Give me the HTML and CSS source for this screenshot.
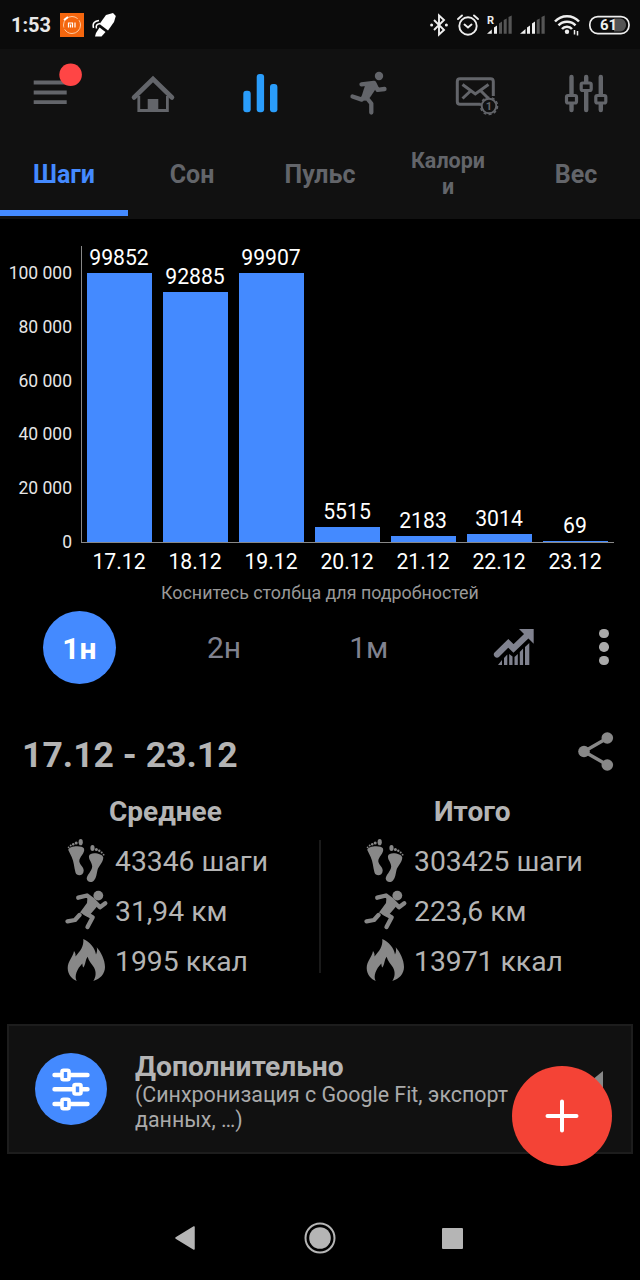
FILE: index.html
```html
<!DOCTYPE html>
<html lang="ru">
<head>
    <meta charset="UTF-8">
    <meta name="viewport" content="width=device-width, initial-scale=1.0">
    <title>Шаги</title>
    <link rel="stylesheet" href="styles.css">
</head>
<body>

    <!-- Shared icons -->
    <svg class="sprite" width="0" height="0">
        <symbol id="icon-feet" viewBox="0 0 44 44">
            <path d="M3.3 11C3 7 17 5.500 19 9.500C20.500 14 14 18 14.300 22.500C15 26 18.700 28 18.700 31.500C18.500 37.500 11.500 37.500 10.500 33.500C9 28 9 23 6.700 18Z"/>
            <ellipse cx="15.700" cy="3.200" rx="2.100" ry="3.100"/>
            <circle cx="11.200" cy="4" r="1.500"/><circle cx="8.200" cy="5.200" r="1.200"/><circle cx="5.700" cy="6.600" r="1"/><circle cx="3.600" cy="8.300" r=".9"/>
            <path d="M24 17C25 12 38 14.500 38.300 18.500C38 24 33.500 27 32.500 31C31.500 35 31.500 39 29 41.500C26 44.500 21.700 42.500 21.700 39.500C21.800 36 27 32 27.200 27.500C27 23 23.500 21 24 17Z"/>
            <ellipse cx="27.500" cy="9" rx="2.100" ry="3"/>
            <circle cx="31.400" cy="10.400" r="1.500"/><circle cx="34.300" cy="11.800" r="1.200"/><circle cx="36.700" cy="13.500" r="1"/><circle cx="38.600" cy="15.700" r=".9"/>
        </symbol>
        <symbol id="icon-sprint" viewBox="0 0 44 44">
            <circle cx="33.300" cy="6.600" r="4.900"/>
            <g fill="none" stroke="currentColor" stroke-width="4.300" stroke-linecap="round" stroke-linejoin="round">
                <path d="M13.200 8.700L22 6.500L28 11L35 18.300L40.300 14.300"/>
                <path d="M20 24L27.700 28.300L22.500 38"/>
                <path d="M14.500 26L10 31L2.500 32.400"/>
            </g>
            <path d="M22.500 8L32.500 17L23 28L15 23.500L22 14Z"/>
        </symbol>
        <symbol id="icon-flame" viewBox="0 0 44 44">
            <path d="M18.300 0C25 3 30 9 31 15.500C32.300 13 32.300 10.500 31.700 8.300C36 13 40 21 40 28C40 35 35 40 28.300 42C31 38 31.500 33 29 28.500C27 25 23.500 22 22.700 17.700C20 21 21 25 18.300 28.500C17.600 27.500 17.500 26 17.300 24.500C12 30 9 37 11.700 42C6.500 40 2.700 35 2.700 29C2.700 22 8 18 9 12C10.300 14 10.800 15 10.500 17.500C15 12 19 8 18.300 0Z"/>
        </symbol>
    </svg>

    <header class="status-bar">
        <span class="time">1:53</span>
        <svg class="app-badge" width="24" height="24" viewBox="0 0 24 24">
            <rect width="24" height="24" fill="#f4660e"/>
            <circle cx="12" cy="12" r="8.500" fill="none" stroke="#ffc9a0" stroke-width="1" stroke-dasharray="22 2"/>
            <path d="M4 7L8 4" stroke="#fff" stroke-width="2"/>
            <path d="M8.500 14.500V10H12.500V14.500M10.500 11.500V14.500M15 9.500V14.500" fill="none" stroke="#fff" stroke-width="1.200"/>
        </svg>
        <svg class="rocket" width="24" height="24" viewBox="0 0 24 24">
            <path d="M14 2L21 0L23.800 3L22 9L16 17.500L7.500 11Z" fill="#fff"/>
            <path d="M7.500 14.500L13.500 19L9.500 23.500H3L4 20Z" fill="#fff"/>
            <path d="M1.500 15C0 10 3 8 7 7.500M4.500 15.500C3.500 12.500 5 11 8 10.500" fill="none" stroke="#fff" stroke-width="1.500"/>
        </svg>
        <div class="status-right">
            <svg width="20" height="24" viewBox="0 0 20 24">
                <path d="M5 7L15 17L10 21.500V2.500L15 7L5 17" fill="none" stroke="#eee" stroke-width="1.900"/>
                <circle cx="2.600" cy="12" r="1.500" fill="#eee"/><circle cx="17.400" cy="12" r="1.500" fill="#eee"/>
            </svg>
            <svg width="24" height="24" viewBox="0 0 24 24" fill="none" stroke="#eee" stroke-width="1.900" stroke-linecap="round">
                <circle cx="12" cy="13" r="8.700"/>
                <path d="M8.500 11.500L12 14.500L15.500 11.500M2 6L6 2.500M22 6L18 2.500"/>
            </svg>
            <svg width="25" height="24" viewBox="0 0 25 24" fill="#eee">
                <text class="roaming" x="0" y="10.500">R</text>
                <path d="M0 20.700L4.800 16.500V20.700ZM7 14.500L10 12.500V20.700H7Z"/>
                <path class="dim" d="M12 10.500L15 8.500V20.700H12ZM16.700 7L19.700 5.500V20.700H16.700ZM21.500 4L24.700 2.500V20.700H21.500Z"/>
            </svg>
            <svg width="26" height="24" viewBox="-1 0 26 24" fill="#eee">
                <path d="M0 20.700L5.500 16V20.700ZM7 14.500L10 12.500V20.700H7ZM12 10.500L15 8.500V20.700H12Z"/>
                <path class="dim" d="M16.700 7L19.700 5.500V20.700H16.700ZM21.500 4L24.700 2.500V20.700H21.500Z"/>
            </svg>
            <svg width="29" height="24" viewBox="0 0 29 24" fill="none" stroke="#eee" stroke-width="2.500">
                <path d="M3 8.500C9.500 1.500 20.500 1.500 27 8.500M6.500 12.300C11 7.500 19 7.500 23.500 12.300M10 16C12.500 13 17.500 13 20 16"/>
                <circle cx="15" cy="18.800" r="2.200" fill="#eee" stroke="none"/>
                <path d="M22.500 17V21.500M25.500 18V22.500" stroke-width="1.500"/>
            </svg>
            <svg width="43" height="24" viewBox="0 0 43 24">
                <path d="M26 5.500H32C40 6 40 18 32 18.500H26Z" fill="#555"/>
                <rect x="1.800" y="3.600" width="39.200" height="17" rx="8" fill="none" stroke="#eee" stroke-width="1.700"/>
                <text class="battery" x="20.500" y="17.300">61</text>
            </svg>
        </div>
    </header>

    <nav class="main-nav">
        <a><svg width="60" height="60" viewBox="0 0 60 60">
            <path d="M13.700 17.500H46.700M13.700 27.500H46.700M13.700 37.200H46.700" stroke="currentColor" stroke-width="3.800"/>
            <circle cx="50.600" cy="9.700" r="11.300" fill="#ff4545"/>
        </svg></a>
        <a><svg width="60" height="60" viewBox="0 0 60 60" fill="none" stroke="currentColor">
            <path d="M11 32.500L30 14L49 32.500" stroke-width="4.600" stroke-linecap="round"/>
            <path d="M15.800 31V45.500H44.400V31" stroke-width="2.800"/>
            <rect x="24.700" y="34" width="10.600" height="12" fill="currentColor" stroke="none"/>
        </svg></a>
        <a class="active"><svg width="60" height="60" viewBox="0 0 60 60" fill="currentColor">
            <rect x="12.300" y="25.700" width="7.400" height="21.600" rx="3"/>
            <rect x="25.700" y="9" width="7.400" height="38.300" rx="3"/>
            <rect x="39" y="19" width="7.400" height="28.300" rx="3"/>
        </svg></a>
        <a><svg width="60" height="60" viewBox="0 0 60 60">
            <circle cx="40" cy="11" r="4.200" fill="currentColor"/>
            <path d="M27 17.500L37 17.500L38 22L31 32.500L26 36L22 33Z" fill="currentColor"/>
            <g fill="none" stroke="currentColor" stroke-width="4.300" stroke-linecap="round" stroke-linejoin="round">
                <path d="M22.500 19.300L35 17.800L38.500 24.800L45.500 24"/>
                <path d="M33 22L22.800 34.600L13.500 31.500"/>
                <path d="M27 32L32.300 38.500L32.300 47.500"/>
            </g>
        </svg></a>
        <a><svg width="60" height="60" viewBox="0 0 60 60" fill="none" stroke="currentColor" stroke-width="3">
            <path d="M33 39.300H13Q10.300 39.300 10.300 36.500V16.500Q10.300 13.700 13 13.700H43.500Q46.300 13.700 46.300 16.500V31" />
            <path d="M15.500 19.500L28.300 29L41.500 19.500M15.500 33.500L23.500 26M41 33L34 26"/>
            <circle cx="42" cy="41" r="7.300" stroke-width="2"/>
            <circle cx="42" cy="41" r="8.600" stroke-width="1.400" stroke-dasharray="3 2.400"/>
            <text class="mail-count" x="42" y="45">1</text>
        </svg></a>
        <a><svg width="60" height="60" viewBox="0 0 60 60" fill="none" stroke="currentColor">
            <path d="M15.500 12V45M30.200 12V45M44.800 12V45" stroke-width="4.400" stroke-linecap="round"/>
            <g fill="#111" stroke-width="3.200">
                <rect x="10.500" y="30.500" width="10" height="7.500" rx="1.500"/>
                <rect x="25.200" y="18" width="10" height="7.500" rx="1.500"/>
                <rect x="39.800" y="30.500" width="10" height="7.500" rx="1.500"/>
            </g>
        </svg></a>
    </nav>

    <div class="tabs">
        <div class="tab active">Шаги</div>
        <div class="tab">Сон</div>
        <div class="tab">Пульс</div>
        <div class="tab small">Калори<br>и</div>
        <div class="tab">Вес</div>
    </div>

    <main>
        <div class="chart">
            <div class="y-axis">
                <span>100 000</span>
                <span>80 000</span>
                <span>60 000</span>
                <span>40 000</span>
                <span>20 000</span>
                <span>0</span>
            </div>
            <div class="plot">
                <div class="column"><span>99852</span><div class="bar" style="height: 269px"></div></div>
                <div class="column"><span>92885</span><div class="bar" style="height: 250px"></div></div>
                <div class="column"><span>99907</span><div class="bar" style="height: 269px"></div></div>
                <div class="column"><span>5515</span><div class="bar" style="height: 15px"></div></div>
                <div class="column"><span>2183</span><div class="bar" style="height: 6px"></div></div>
                <div class="column"><span>3014</span><div class="bar" style="height: 8px"></div></div>
                <div class="column"><span>69</span><div class="bar" style="height: 1px"></div></div>
            </div>
            <div class="x-axis">
                <span>17.12</span>
                <span>18.12</span>
                <span>19.12</span>
                <span>20.12</span>
                <span>21.12</span>
                <span>22.12</span>
                <span>23.12</span>
            </div>
        </div>
        <p class="hint">Коснитесь столбца для подробностей</p>

        <div class="periods">
            <div class="period selected">1н</div>
            <div class="period">2н</div>
            <div class="period">1м</div>
            <div class="period">
                <svg width="40" height="37" viewBox="-1 0 40 37">
                    <path d="M3 25.500L14.300 14.300L19.500 19.500L33 6.500" fill="none" stroke="currentColor" stroke-width="6.200" stroke-linecap="round"/>
                    <path d="M25 0H39.700V14.700Z" fill="currentColor"/>
                    <path d="M4 36L8 31V36ZM10 29L13.300 25.500V36H10ZM15.200 25L18.500 27.500V36H15.200ZM20.500 28L23.800 25V36H20.500ZM25.800 23L29.100 19.500V36H25.800ZM31 18L35.300 14V36H31Z" fill="currentColor"/>
                </svg>
            </div>
            <div class="more"><i></i><i></i><i></i></div>
        </div>

        <section class="summary">
            <div class="summary-head">
                <h1>17.12 - 23.12</h1>
                <svg width="36" height="40" viewBox="0 0 36 40">
                    <path d="M29.500 6L6 19.500L29.500 33" fill="none" stroke="#888" stroke-width="3.400"/>
                    <circle cx="29.300" cy="6" r="5.800"/><circle cx="6" cy="19.500" r="5.800"/><circle cx="29.300" cy="33" r="5.800"/>
                </svg>
            </div>
            <div class="stats">
                <div class="stat-col average">
                    <h2>Среднее</h2>
                    <div class="stat"><svg><use href="#icon-feet"/></svg>43346 шаги</div>
                    <div class="stat"><svg><use href="#icon-sprint"/></svg>31,94 км</div>
                    <div class="stat"><svg><use href="#icon-flame"/></svg>1995 ккал</div>
                </div>
                <div class="divider"></div>
                <div class="stat-col total">
                    <h2>Итого</h2>
                    <div class="stat"><svg><use href="#icon-feet"/></svg>303425 шаги</div>
                    <div class="stat"><svg><use href="#icon-sprint"/></svg>223,6 км</div>
                    <div class="stat"><svg><use href="#icon-flame"/></svg>13971 ккал</div>
                </div>
            </div>
        </section>

        <div class="extra-card">
            <div class="extra-icon">
                <svg width="40" height="44" viewBox="0 0 40 44" fill="none" stroke="#fff">
                    <path d="M3.500 8H36.500M3.500 22.300H36.500M3.500 37H36.500" stroke-width="4.400" stroke-linecap="round"/>
                    <g fill="#448aff" stroke-width="3.600">
                        <rect x="11" y="3.300" width="7" height="9.400" rx="1.500"/>
                        <rect x="23" y="17.600" width="7" height="9.400" rx="1.500"/>
                        <rect x="11" y="32.300" width="7" height="9.400" rx="1.500"/>
                    </g>
                </svg>
            </div>
            <div class="extra-text">
                <h3>Дополнительно</h3>
                <p>(Синхронизация с Google Fit, экспорт данных, …)</p>
            </div>
            <svg class="expand" width="22" height="36" viewBox="0 0 22 36"><path d="M22 0V36L0 18Z" fill="#888"/></svg>
            <button class="fab">
                <svg width="34" height="34" viewBox="0 0 34 34"><path d="M17 2.500V31.500M2.500 17H31.500" stroke="#fff" stroke-width="4" stroke-linecap="round"/></svg>
            </button>
        </div>
    </main>

    <footer class="system-nav">
        <svg width="20" height="24" viewBox="0 0 20 24"><path d="M19 1V23L1 12Z" stroke="#b5b5b5" stroke-width="1.500" stroke-linejoin="round"/></svg>
        <svg width="32" height="32" viewBox="0 0 32 32"><circle cx="16" cy="16" r="14.500" fill="none" stroke="#b5b5b5" stroke-width="2"/><circle cx="16" cy="16" r="10.800"/></svg>
        <svg width="21" height="21" viewBox="0 0 21 21"><rect width="21" height="21" rx="1"/></svg>
    </footer>

</body>
</html>
```
FILE: styles.css
```css
* {
    box-sizing: border-box;
}

body {
    margin: 0;
    width: 640px;
    height: 1280px;
    display: flex;
    flex-direction: column;
    background-color: #000;
    color: #b4b4b4;
    font-family: Roboto, "Noto Sans", sans-serif;
    overflow: hidden;
}

h1, h2, h3, p {
    margin: 0;
}

svg {
    display: block;
    overflow: visible;
    flex-shrink: 0;
}

.sprite {
    position: absolute;
}

/* Status bar */
.status-bar {
    height: 49px;
    display: flex;
    align-items: center;
    padding: 0 9px 0 11px;
    background-color: #0b0b0b;
}

.time {
    width: 49px;
    color: #e8e8e8;
    font-size: 20px;
    font-weight: 700;
}

.rocket {
    margin-left: 8px;
}

.status-right {
    margin-left: auto;
    display: flex;
    gap: 7px;
}

.dim {
    fill: #555;
}

.roaming {
    font-size: 11px;
    font-weight: 700;
}

.battery {
    font-size: 15px;
    font-weight: 700;
    fill: #eee;
    text-anchor: middle;
}

/* Top navigation */
.main-nav {
    height: 91px;
    display: grid;
    grid-template-columns: 99px repeat(4, 108px) 109px;
    align-items: center;
    justify-items: center;
    background-color: #111;
    color: #63656a;
}

.main-nav .active {
    color: #2a9dfb;
}

.mail-count {
    font-size: 11px;
    font-weight: 700;
    fill: #63656a;
    stroke: none;
    text-anchor: middle;
}

.tabs {
    height: 79px;
    padding-bottom: 3px;
    display: grid;
    grid-template-columns: repeat(5, 1fr);
    background-color: #111;
}

.tab {
    display: flex;
    align-items: center;
    justify-content: center;
    padding-bottom: 2px;
    border-bottom: 6px solid transparent;
    color: #63656a;
    font-size: 25px;
    font-weight: 700;
    text-align: center;
}

.tab.small {
    font-size: 21.500px;
    line-height: 26px;
}

.tab.active {
    color: #448aff;
    border-bottom-color: #448aff;
}

/* Chart */
.chart {
    display: grid;
    grid-template-columns: 81px 533px;
    grid-template-rows: 297px 36px;
    margin-top: 27px;
}

.y-axis {
    display: flex;
    flex-direction: column;
    justify-content: space-between;
    height: 291px;
    margin-top: 16px;
    padding-right: 9px;
    color: #e6e6e6;
    font-size: 17.500px;
    line-height: 22px;
    text-align: right;
}

.plot {
    display: flex;
    border-left: 1px solid #888;
    border-bottom: 1px solid #888;
}

.column {
    width: 76px;
    display: flex;
    flex-direction: column;
    align-items: center;
    justify-content: flex-end;
    padding-right: 2px;
    color: #fff;
    font-size: 21.200px;
    line-height: 30px;
}

.bar {
    width: 65px;
    flex-shrink: 0;
    background-color: #448aff;
}

.x-axis {
    grid-column: 2;
    display: grid;
    grid-template-columns: repeat(7, 76px);
    color: #fff;
    font-size: 21.200px;
    line-height: 38px;
    text-align: center;
}

.hint {
    height: 31px;
    color: #999;
    font-size: 17.850px;
    line-height: 28px;
    text-align: center;
}

/* Period switch */
.periods {
    display: grid;
    grid-template-columns: repeat(4, 144.700px) 36px;
    align-items: center;
    justify-items: center;
    height: 74px;
    padding-left: 7px;
}

.period {
    color: #80828f;
    font-size: 30px;
}

.period.selected {
    width: 73px;
    height: 73px;
    border-radius: 50%;
    background-color: #448aff;
    color: #fff;
    font-weight: 700;
    line-height: 76px;
    text-align: center;
}

.more {
    display: flex;
    flex-direction: column;
    gap: 4px;
}

.more i {
    width: 9.500px;
    height: 9.500px;
    border-radius: 50%;
    background-color: #aaa;
}

/* Summary */
.summary-head {
    display: flex;
    align-items: center;
    justify-content: space-between;
    height: 56px;
    margin-top: 43px;
    padding: 0 26px 0 22px;
    fill: #888;
}

.summary-head svg {
    margin-bottom: 7px;
}

h1 {
    font-size: 35.600px;
    line-height: 56px;
}

.stats {
    display: flex;
    height: 205px;
}

.stat-col {
    width: 299px;
}

.stat-col.average {
    width: 319px;
    padding-left: 65px;
}

.stat-col.total {
    padding-left: 43px;
}

h2 {
    height: 53px;
    font-size: 28px;
    line-height: 58px;
}

.average h2 {
    padding-left: 44px;
}

.total h2 {
    padding-left: 70px;
}

.stat {
    display: flex;
    align-items: center;
    height: 50px;
    font-size: 28.300px;
}

.stat svg {
    width: 44px;
    height: 44px;
    margin-right: 6px;
    fill: #888;
    color: #888;
}

.divider {
    width: 2px;
    height: 133px;
    margin-top: 57px;
    background-color: #1a1a1a;
}

/* Additional options */
.extra-card {
    position: relative;
    display: flex;
    align-items: center;
    height: 130px;
    margin: 36px 7px 0;
    padding-left: 26px;
    background-color: #111;
    border: 2px solid #1d1d1d;
}

.extra-icon {
    width: 72px;
    height: 72px;
    display: flex;
    align-items: center;
    justify-content: center;
    border-radius: 50%;
    background-color: #448aff;
}

.extra-text {
    width: 390px;
    margin-left: 28px;
    padding-top: 6px;
}

h3 {
    font-size: 28.200px;
    line-height: 30px;
}

.extra-text p {
    color: #aaa;
    font-size: 21.400px;
    line-height: 25px;
}

.expand {
    margin-left: 56px;
}

.fab {
    position: absolute;
    left: 503px;
    top: 40px;
    width: 100px;
    height: 100px;
    display: flex;
    align-items: center;
    justify-content: center;
    padding: 0;
    border: none;
    border-radius: 50%;
    background-color: #f44336;
}

/* System buttons */
.system-nav {
    display: flex;
    align-items: center;
    gap: 109px;
    height: 84px;
    margin-top: auto;
    padding-left: 175px;
    fill: #b5b5b5;
}

.system-nav svg:nth-child(2) {
    margin-right: -3px;
}
```
